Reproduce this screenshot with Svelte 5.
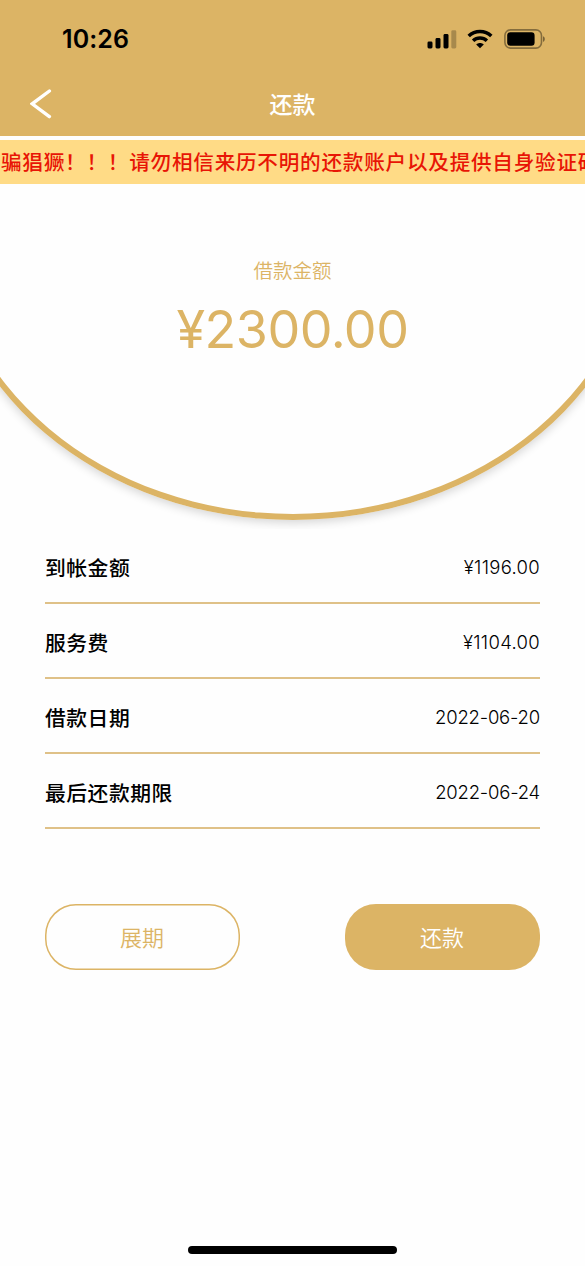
<script lang="ts">
    const notice = '骗猖獗！！！请勿相信来历不明的还款账户以及提供自身验证码';
    const amount = '¥2300.00';

    const rows = [
        { label: '到帐金额', value: '¥1196.00', money: true },
        { label: '服务费', value: '¥1104.00', money: true },
        { label: '借款日期', value: '2022-06-20', money: false },
        { label: '最后还款期限', value: '2022-06-24', money: false },
    ];
</script>

<div class="page">
    <header class="header">
        <div class="status-bar">
            <span class="time">10:26</span>
            <div class="status-icons">
                <svg class="signal" width="30" height="19" viewBox="0 0 30 19">
                    <rect x="0.5" y="11.5" width="5" height="7" rx="1.4" />
                    <rect x="8.5" y="8" width="5" height="10.5" rx="1.4" />
                    <rect x="16.5" y="4" width="5" height="14.5" rx="1.4" />
                    <rect x="24.3" y="0.3" width="5" height="18.2" rx="1.4" opacity="0.24" />
                </svg>
                <svg class="wifi" width="26" height="20" viewBox="0 0 26 20">
                    <path d="M1.7 7C8 0.9 18 0.9 24.3 7" />
                    <path d="M6.1 11.7C10 8 16 8 19.9 11.7" />
                    <path class="dot" d="M13 19.2L9.2 15.4C11.4 13.4 14.6 13.4 16.8 15.4Z" />
                </svg>
                <svg class="battery" width="42" height="20" viewBox="0 0 42 20">
                    <rect x="0.9" y="0.9" width="36.6" height="18.2" rx="5.6" fill="none" stroke="#000" stroke-width="1.6" opacity="0.4" />
                    <rect x="3.2" y="3.2" width="27.4" height="13.6" rx="3.2" />
                    <path d="M39 7.2C41.4 8 41.4 12 39 12.8Z" opacity="0.45" />
                </svg>
            </div>
        </div>
        <nav class="nav-bar">
            <button class="back" aria-label="返回">
                <svg width="22" height="30" viewBox="0 0 22 30">
                    <path d="M19.4 2L2.2 14.8L19.4 27.6" />
                </svg>
            </button>
            <h1>还款</h1>
        </nav>
    </header>

    <div class="notice">{notice}</div>

    <section class="hero">
        <div class="ring"></div>
        <p class="hero-label">借款金额</p>
        <p class="hero-amount">{amount}</p>
    </section>

    <ul class="details">
        {#each rows as row}
            <li>
                <span class="label">{row.label}</span>
                <span class="value" class:money={row.money}>{row.value}</span>
            </li>
        {/each}
    </ul>

    <div class="actions">
        <button class="btn outline">展期</button>
        <button class="btn solid">还款</button>
    </div>

    <div class="home-indicator"></div>
</div>

<style>
    :global(body) {
        margin: 0;
        background: #fefefe;
    }

    .page {
        display: flex;
        flex-direction: column;
        width: 585px;
        height: 1266px;
        overflow: hidden;
        background: #fefefe;
        font-family: Inter, 'Noto Sans CJK SC', sans-serif;
        color: #000;
    }

    .header {
        flex: none;
        height: 136px;
        background: #dcb465;
    }

    .status-bar {
        display: flex;
        align-items: center;
        justify-content: space-between;
        height: 71px;
        padding: 7px 39px 0 62px;
        box-sizing: border-box;
    }

    .time {
        font-size: 25px;
        font-weight: 600;
        letter-spacing: 0.1px;
    }

    .status-icons {
        display: flex;
        align-items: center;
    }

    .wifi {
        margin-left: 10px;
        fill: none;
        stroke: #000;
        stroke-width: 3.5;
    }

    .wifi .dot {
        fill: #000;
        stroke: none;
    }

    .battery {
        margin-left: 11px;
    }

    .nav-bar {
        display: grid;
        grid-template-columns: 60px 1fr 60px;
        align-items: center;
        height: 65px;
    }

    .back {
        display: flex;
        padding: 0 0 0 30px;
        border: 0;
        background: none;
    }

    .back path {
        fill: none;
        stroke: #fff;
        stroke-width: 3.4;
        stroke-linecap: round;
    }

    h1 {
        margin: 0;
        padding-top: 2px;
        text-align: center;
        font-size: 23px;
        font-weight: 500;
        line-height: 34px;
        color: #fff;
    }

    .notice {
        flex: none;
        height: 44px;
        margin-top: 4px;
        padding-left: 1px;
        line-height: 46px;
        overflow: hidden;
        white-space: nowrap;
        background: #ffdb86;
        color: #e81505;
        font-size: 20.6px;
        font-weight: 500;
        letter-spacing: 0.77px;
    }

    .hero {
        position: relative;
        flex: none;
        height: 345px;
        padding-top: 72px;
        box-sizing: border-box;
        overflow: hidden;
        text-align: center;
        color: #dcb465;
    }

    /* wide ellipse, only its lower arc shows inside the hero */
    .ring {
        position: absolute;
        left: -10%;
        bottom: 9px;
        width: 120%;
        height: 594px;
        box-sizing: border-box;
        border: 6px solid #dcb465;
        border-radius: 50%;
        box-shadow: 0 3px 10px rgba(0, 0, 0, 0.16);
    }

    .hero-label {
        margin: 0;
        font-size: 19.5px;
        font-weight: 350;
        line-height: 30px;
    }

    .hero-amount {
        margin: 12px 0 0;
        font-size: 52px;
        line-height: 64px;
        letter-spacing: -0.5px;
    }

    .details {
        flex: none;
        margin: 0 45px;
        padding: 0;
        list-style: none;
    }

    .details li {
        display: flex;
        align-items: center;
        justify-content: space-between;
        height: 75px;
        padding-top: 2px;
        box-sizing: border-box;
        border-bottom: 2px solid #dfc188;
    }

    .label {
        font-size: 20.8px;
        font-weight: 500;
        line-height: 30px;
        letter-spacing: 0.5px;
        padding-top: 4px;
    }

    .value {
        font-size: 18.5px;
        font-weight: 300;
        letter-spacing: -0.2px;
    }

    .value.money {
        letter-spacing: 0.3px;
    }

    .actions {
        display: flex;
        flex: none;
        justify-content: space-between;
        margin: 75px 45px 0;
    }

    .btn {
        width: 195px;
        height: 66px;
        padding: 0 1px 3px 0;
        border: 0;
        border-radius: 31px;
        font-family: inherit;
        font-size: 22px;
        font-weight: 350;
    }

    .outline {
        background: #fefefe;
        box-shadow: inset 0 0 0 1.5px #dcb465;
        color: #dcb465;
    }

    .solid {
        background: #dcb465;
        color: #fff;
    }

    .home-indicator {
        width: 209px;
        height: 8px;
        margin: auto auto 12px;
        border-radius: 4px;
        background: #000;
    }
</style>
